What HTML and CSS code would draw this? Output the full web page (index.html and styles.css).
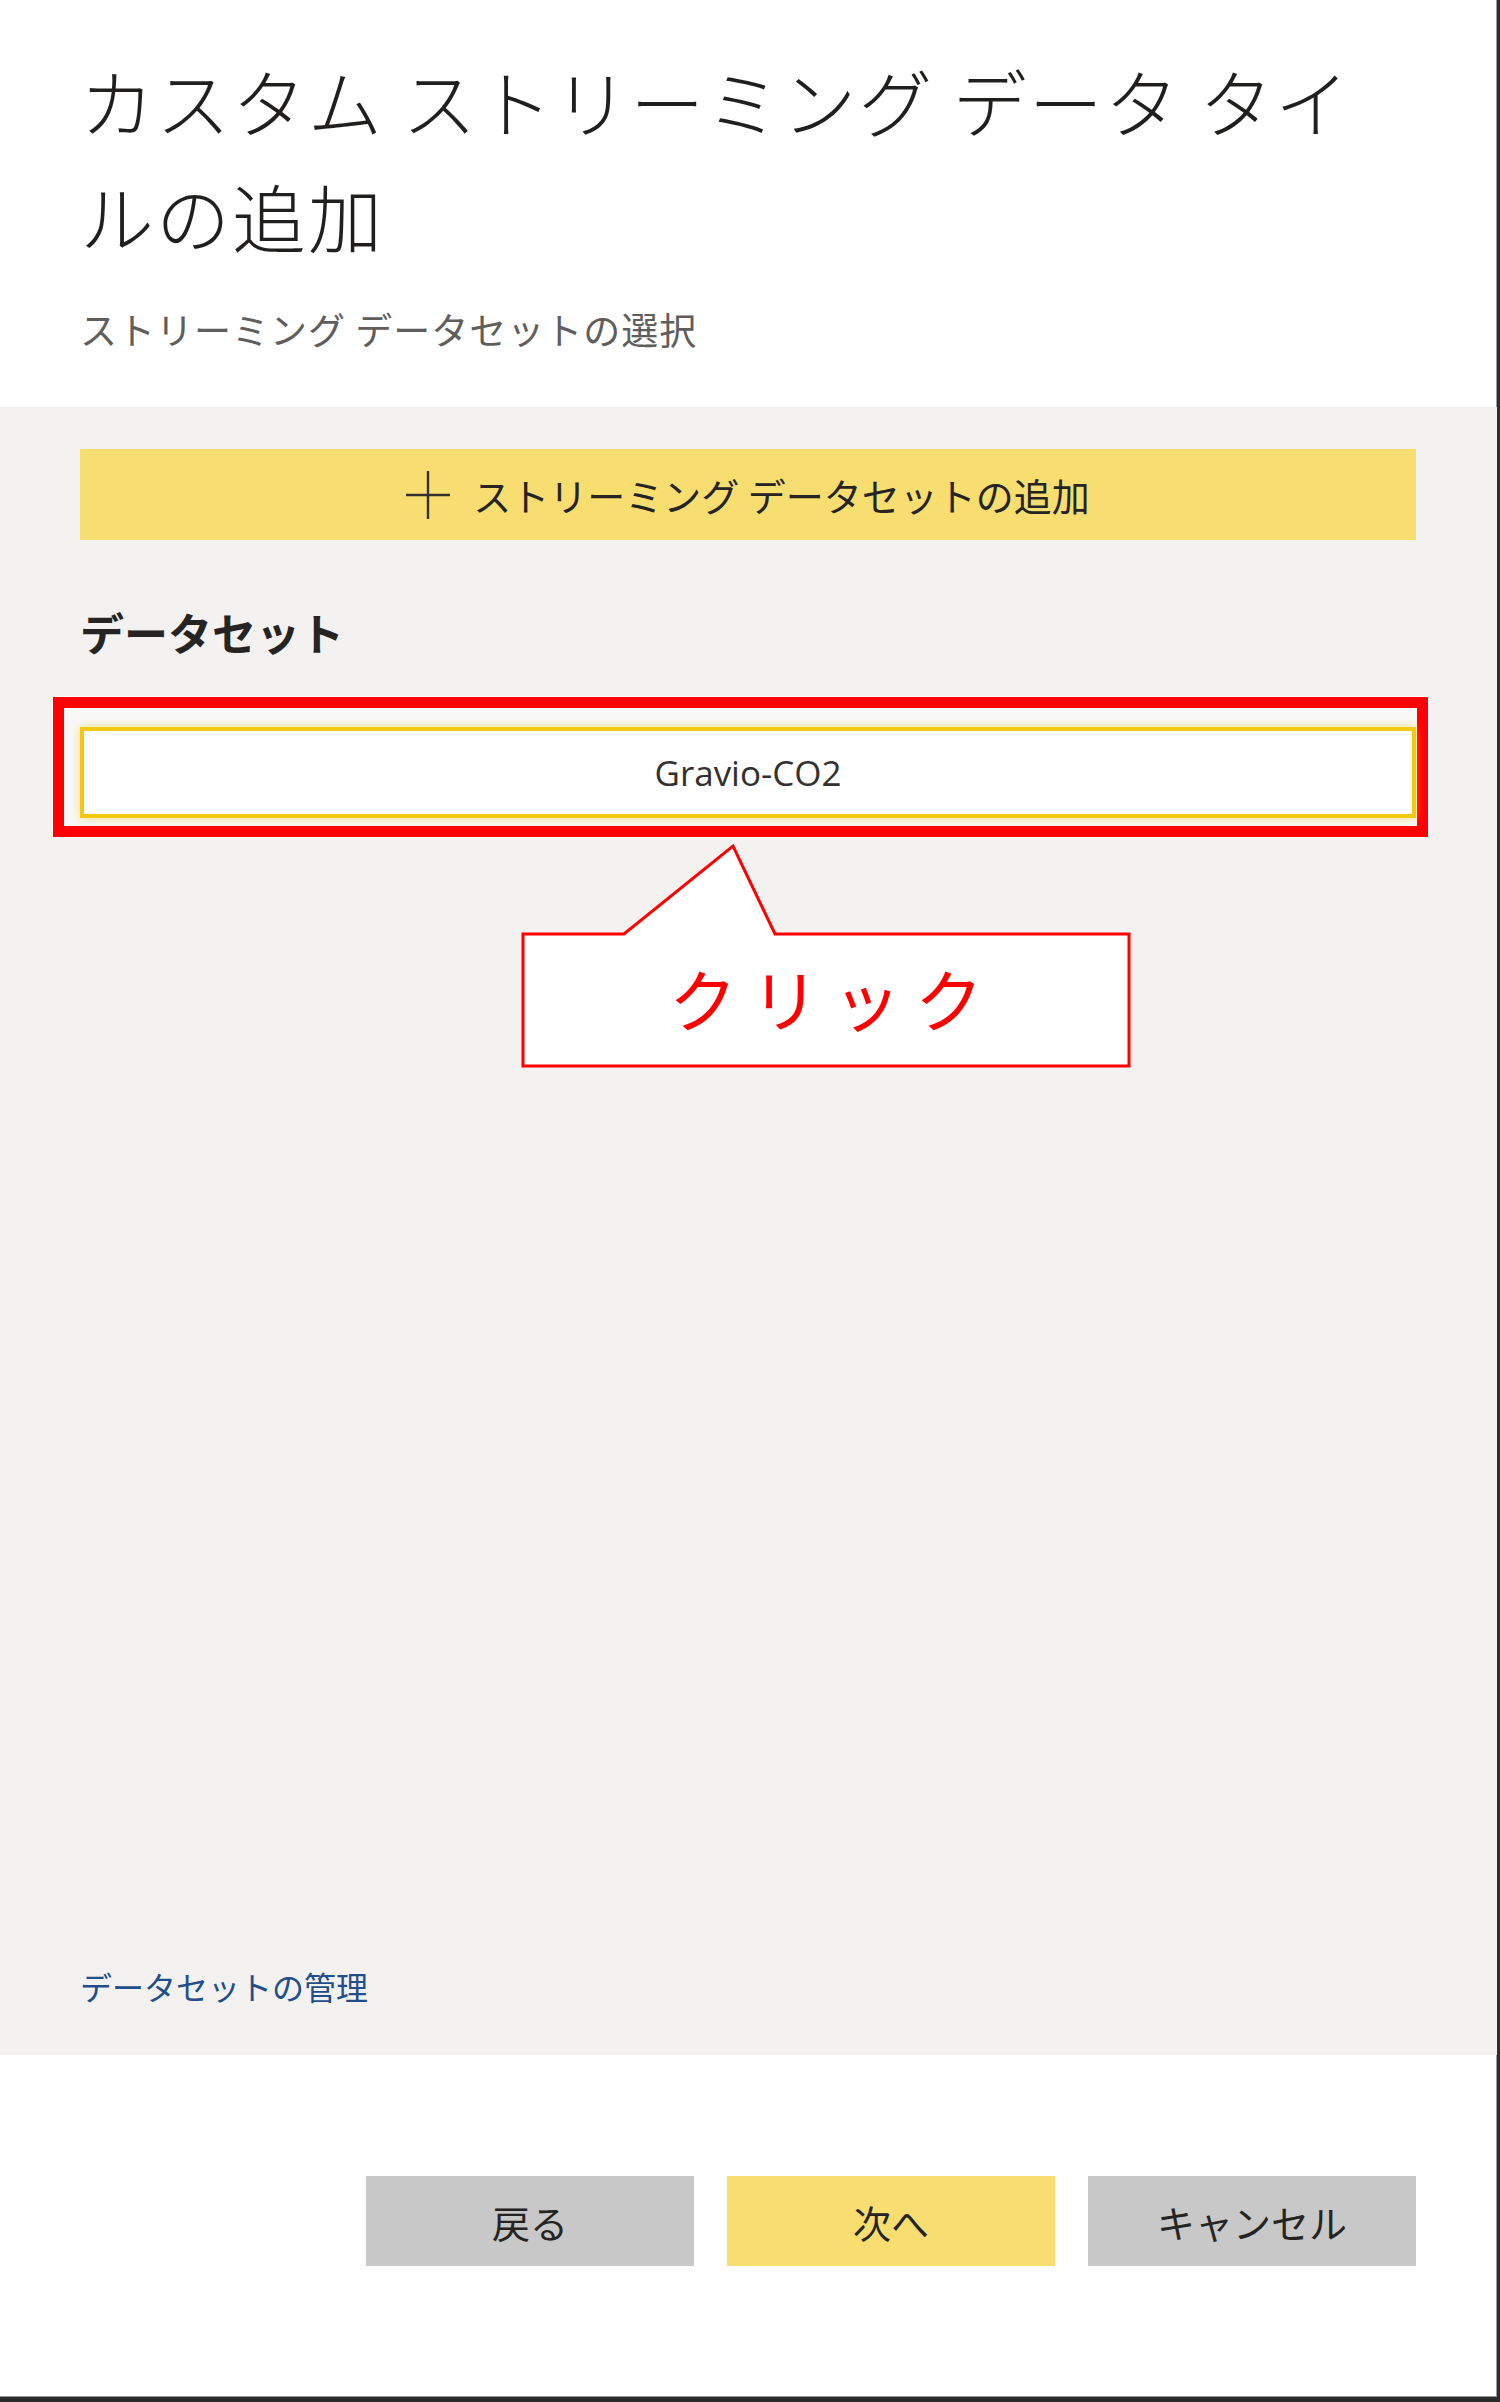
FILE: index.html
```html
<!DOCTYPE html>
<html lang="ja">
<head>
    <meta charset="utf-8">
    <title>カスタム ストリーミング データ タイルの追加</title>
    <link rel="stylesheet" href="styles.css">
</head>
<body>

    <div class="panel">
        <div class="header">
            <h1 class="title">カスタム ストリーミング データ タイルの追加</h1>
            <p class="subtitle">ストリーミング データセットの選択</p>
        </div>

        <div class="content">
            <button class="add-btn">
                <svg class="plus" width="44" height="48" viewBox="0 0 44 48">
                    <line x1="0" y1="24" x2="44" y2="24" stroke="#323130" stroke-width="2.4"/>
                    <line x1="22" y1="0" x2="22" y2="48" stroke="#323130" stroke-width="2.4"/>
                </svg>
                <span>ストリーミング データセットの追加</span>
            </button>

            <h2 class="section-title">データセット</h2>

            <div class="dataset-wrap">
                <div class="mark-frame"></div>
                <div class="dataset-item">Gravio-CO2</div>

                <!-- annotation balloon -->
                <div class="callout">
                    <svg class="callout-shape" width="612" height="226" viewBox="0 0 612 226">
                        <polygon points="3,91 104,91 213,3 255,91 609,91 609,223 3,223"
                                 fill="#fff" stroke="#ff0000" stroke-width="3"/>
                    </svg>
                    <div class="callout-text">クリック</div>
                </div>
            </div>

            <a href="#" class="manage-link">データセットの管理</a>
        </div>

        <div class="footer">
            <button class="btn btn-gray">戻る</button>
            <button class="btn btn-yellow">次へ</button>
            <button class="btn btn-gray">キャンセル</button>
        </div>
    </div>

</body>
</html>
```

FILE: styles.css
```css
body {
    margin: 0;
    background: #fff;
    font-family: "Noto Sans CJK JP", sans-serif;
    color: #252423;
}

.panel {
    box-sizing: border-box;
    width: 1500px;
    height: 2402px;
    border-right: 3px solid #2d2d2d;
    border-bottom: 5px solid #2b2b2b;
    box-shadow: inset -1px -1px 0 #9c9c9c;
    display: flex;
    flex-direction: column;
}

.header {
    padding: 42px 81px 53px 80px;
}

.title {
    margin: 0;
    max-width: 1320px;
    font-size: 74px;
    font-weight: 300;
    line-height: 115px;
    letter-spacing: 2px;
    color: #201f1e;
}

.subtitle {
    margin: 32px 0 0;
    font-size: 37px;
    line-height: 50px;
    letter-spacing: 1px;
    color: #605e5c;
}

.content {
    height: 1648px;
    box-sizing: border-box;
    background: #f3f2f1;
    padding: 42px 81px 47px 80px;
    display: flex;
    flex-direction: column;
}

.add-btn {
    height: 91px;
    border: none;
    background: #f8de70;
    display: flex;
    align-items: center;
    justify-content: center;
    gap: 23px;
    font-family: "Noto Sans CJK JP", sans-serif;
    font-size: 38px;
    color: #252423;
    padding: 0;
}

.plus {
    display: block;
}

.section-title {
    margin: 62px 0 0;
    font-size: 44px;
    font-weight: bold;
    line-height: 60px;
    color: #252423;
}

.dataset-wrap {
    position: relative;
    margin-top: 65px;
}

.dataset-item {
    position: relative;
    z-index: 1;
    box-sizing: border-box;
    height: 91px;
    background: #fff;
    border: 4px solid #f2c811;
    box-shadow: 0 0 8px rgba(242, 200, 17, 0.55);
    display: flex;
    align-items: center;
    justify-content: center;
    font-family: "Open Sans", "Noto Sans CJK JP", sans-serif;
    font-size: 35px;
    color: #323130;
}

.mark-frame {
    position: absolute;
    left: -27px;
    right: -12px;
    top: -30px;
    bottom: -19px;
    border: 11px solid #ff0000;
    background: #f8f8f7;
    box-shadow: 0 0 0 1px #fff;
    z-index: 0;
}

.callout {
    position: absolute;
    left: 440px;
    top: 116px;
    width: 612px;
    height: 226px;
    z-index: 2;
}

.callout-shape {
    position: absolute;
    left: 0;
    top: 0;
}

.callout-text {
    position: relative;
    margin-top: 88px;
    height: 132px;
    display: flex;
    align-items: center;
    justify-content: center;
    font-size: 68px;
    letter-spacing: 14px;
    padding-left: 14px;
    color: #ff0000;
}

.manage-link {
    margin-top: auto;
    font-size: 32px;
    line-height: 44px;
    color: #1f4e8a;
    text-decoration: none;
    align-self: flex-start;
}

.footer {
    flex: 1;
    display: flex;
    justify-content: flex-end;
    align-items: flex-start;
    gap: 33px;
    padding: 121px 81px 0 80px;
}

.btn {
    width: 328px;
    height: 90px;
    border: none;
    font-family: "Noto Sans CJK JP", sans-serif;
    font-size: 38px;
    color: #252423;
    padding: 0;
}

.btn-gray {
    background: #c8c8c8;
}

.btn-yellow {
    background: #f8de70;
}
```
